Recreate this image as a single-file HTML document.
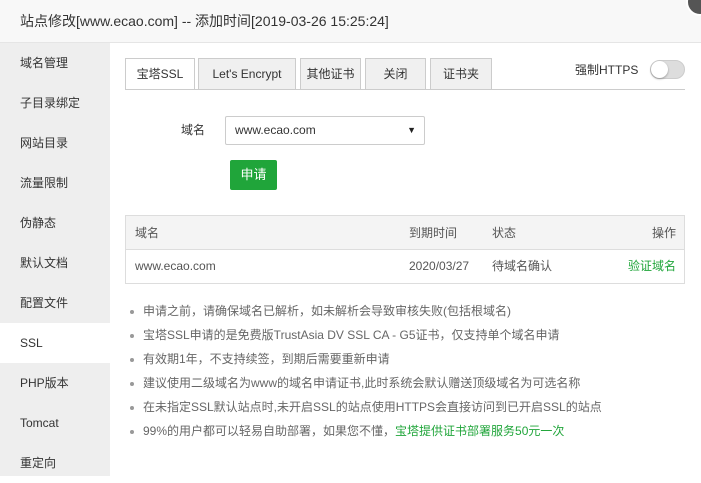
<!DOCTYPE html>
<html><head><meta charset="utf-8"><style>
*{margin:0;padding:0;box-sizing:border-box}
body{width:701px;height:476px;overflow:hidden;background:#fff;font-family:"Liberation Sans","Noto Sans CJK SC",sans-serif;font-size:12px;color:#555;position:relative}
.title{position:absolute;left:0;top:0;width:701px;height:43px;background:#f8f8f8;border-bottom:1px solid #e5e5e5;font-size:14px;color:#333;line-height:42px;padding-left:20px}
.close{position:absolute;left:686px;top:-12px;width:28px;height:28px;border-radius:50%;background:#555;border:2px solid #fff}
.side{position:absolute;left:0;top:43px;width:110px;height:433px;background:#eee}
.side div{height:40px;line-height:40px;padding-left:20px;color:#333;font-size:12px}
.side .on{background:#fff}
.tab{position:absolute;top:58px;height:31px;border:1px solid #ccc;border-bottom:none;background:#f0f0f0;line-height:31px;text-align:center;color:#333;font-size:12px}
.tab.on{background:#fff;height:32px}
.line{position:absolute;left:125px;top:89px;width:560px;height:1px;background:#ccc}
.sw{position:absolute;left:650px;top:60px;width:35px;height:19px;border-radius:10px;background:#ddd;border:1px solid #ccc}
.sw:after{content:"";position:absolute;left:0;top:0;width:17px;height:17px;border-radius:50%;background:#fff;box-shadow:0 1px 2px rgba(0,0,0,.3)}
.sel{position:absolute;left:225px;top:116px;width:200px;height:29px;border:1px solid #ccc;border-radius:2px;line-height:27px;padding-left:9px;color:#333;font-size:12px}
.btn{position:absolute;left:230px;top:160px;width:47px;height:30px;background:#20a53a;border-radius:2px;color:#fff;line-height:30px;text-align:center;font-size:13px}
.tbl{position:absolute;left:125px;top:215px;width:560px;height:69px;border:1px solid #ddd}
.tbl .h{height:34px;background:#f4f4f4;border-bottom:1px solid #ddd;position:relative}
.tbl .r{height:33px;position:relative}
.tbl span{position:absolute;top:0;line-height:34px}
.r span{line-height:33px}
ul{position:absolute;left:130px;top:299px;list-style:none}
li{height:24px;line-height:24px;color:#666;font-size:12px;position:relative;padding-left:13px}
li:before{content:"";position:absolute;left:0;top:11px;width:4px;height:4px;border-radius:50%;background:#999}
.g{color:#20a53a}
</style></head><body>
<div class="title">站点修改[www.ecao.com] -- 添加时间[2019-03-26 15:25:24]</div>
<div class="close"></div>
<div class="side">
<div>域名管理</div><div>子目录绑定</div><div>网站目录</div><div>流量限制</div><div>伪静态</div><div>默认文档</div><div>配置文件</div><div class="on">SSL</div><div>PHP版本</div><div>Tomcat</div><div>重定向</div>
</div>
<div class="tab on" style="left:125px;width:70px">宝塔SSL</div>
<div class="tab" style="left:198px;width:98px">Let's Encrypt</div>
<div class="tab" style="left:300px;width:61px">其他证书</div>
<div class="tab" style="left:365px;width:61px">关闭</div>
<div class="tab" style="left:430px;width:62px">证书夹</div>
<div class="line"></div>
<div style="position:absolute;left:575px;top:62px;color:#333;font-size:12px;line-height:16px">强制HTTPS</div>
<div class="sw"></div>
<div style="position:absolute;left:181px;top:122px;color:#333;line-height:16px">域名</div>
<div class="sel">www.ecao.com<span style="position:absolute;right:8px;top:0;font-size:9px;color:#222">▼</span></div>
<div class="btn">申请</div>
<div class="tbl">
<div class="h"><span style="left:9px">域名</span><span style="left:283px">到期时间</span><span style="left:366px">状态</span><span style="right:8px">操作</span></div>
<div class="r"><span style="left:9px">www.ecao.com</span><span style="left:283px">2020/03/27</span><span style="left:366px">待域名确认</span><span style="right:8px" class="g">验证域名</span></div>
</div>
<ul>
<li>申请之前，请确保域名已解析，如未解析会导致审核失败(包括根域名)</li>
<li>宝塔SSL申请的是免费版TrustAsia DV SSL CA - G5证书，仅支持单个域名申请</li>
<li>有效期1年，不支持续签，到期后需要重新申请</li>
<li>建议使用二级域名为www的域名申请证书,此时系统会默认赠送顶级域名为可选名称</li>
<li>在未指定SSL默认站点时,未开启SSL的站点使用HTTPS会直接访问到已开启SSL的站点</li>
<li>99%的用户都可以轻易自助部署，如果您不懂，<span class="g">宝塔提供证书部署服务50元一次</span></li>
</ul>
</body></html>
